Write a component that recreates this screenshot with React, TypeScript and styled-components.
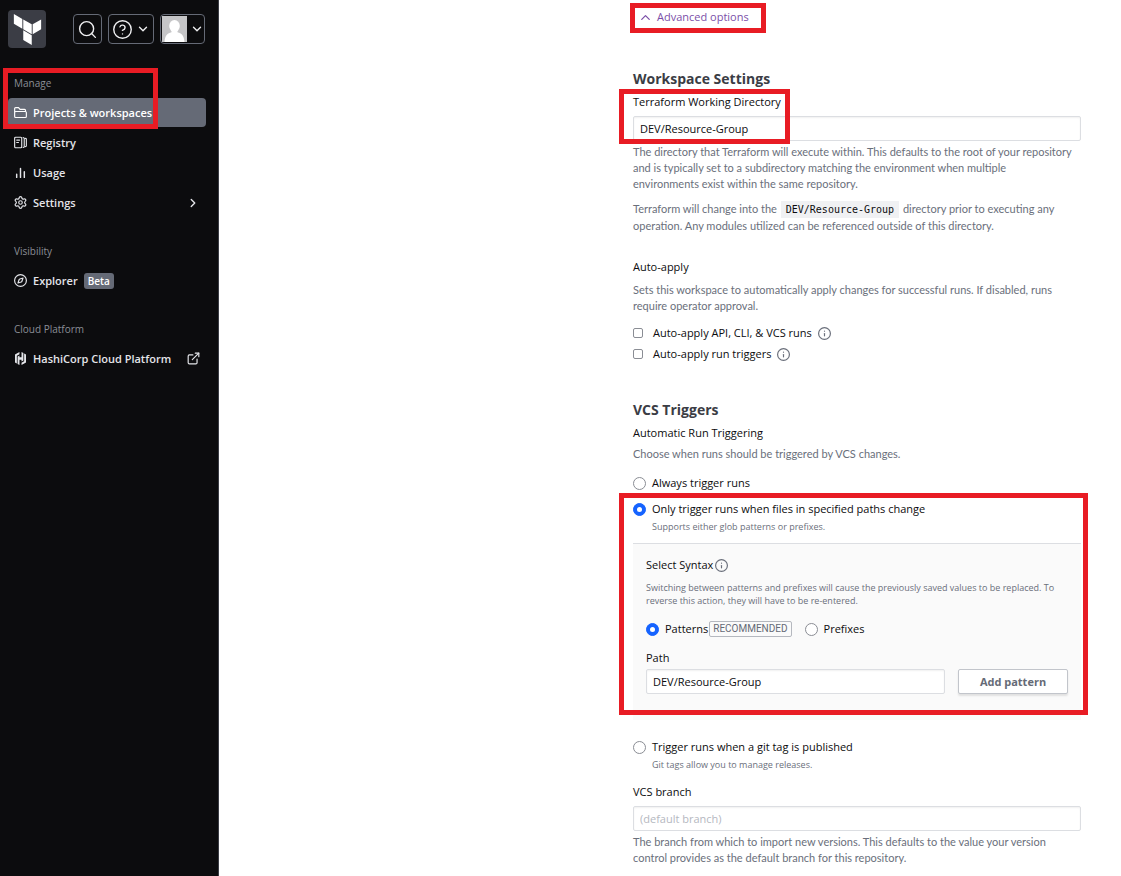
import React, { useState } from 'react';
import styled, { createGlobalStyle } from 'styled-components';
import {
  ChevronDown,
  ChevronRight,
  ChevronUp,
  CircleHelp,
  Compass,
  ExternalLink,
  Info,
  Search,
  Settings,
} from 'lucide-react';

const uiFont = '"Open Sans", "Noto Sans", sans-serif';
const proseFont = 'Lato, "Open Sans", sans-serif';
const color = {
  side: '#0c0c0e',
  sideText: '#e4e5e9',
  sideMuted: '#8b8e96',
  sideActive: '#656a76',
  ink: '#0c0c0e',
  heading: '#3b3d45',
  muted: '#6a6f7b',
  line: '#dcdee2',
  blue: '#1563ff',
  violet: '#7b4fa8',
  red: '#e81c24',
};

const GlobalStyle = createGlobalStyle`
  *, *::before, *::after { box-sizing: border-box; }
  body { margin: 0; background: #fff; color: ${color.ink}; font: 11px/16px ${uiFont}; }
  button, input { font: inherit; color: inherit; }
  button { cursor: pointer; }
  h2, p, ul { margin: 0; padding: 0; }
  svg { display: block; flex: none; }
`;

/* Layout */

const Page = styled.div`
  display: flex;
  min-height: 100vh;
`;

const Sidebar = styled.aside`
  flex: 0 0 219px;
  padding: 10px 12px 10px 8px;
  background: ${color.side};
  border-right: 1px solid #3b3d45;
  color: ${color.sideText};
`;

const Main = styled.main`
  flex: 1;
  display: flex;
  justify-content: flex-end;
  padding: 9px 40px 10px;
`;

const Form = styled.form`
  flex: 0 1 448px;
  min-width: 0;
`;

const Highlight = styled.span<{ $inset: string }>`
  position: absolute;
  inset: ${(p) => p.$inset};
  border: 5px solid ${color.red};
  pointer-events: none;
`;

/* Sidebar */

const TopBar = styled.div`
  display: flex;
  align-items: center;
  justify-content: space-between;
  padding-right: 1px;
  margin-bottom: 27px;
`;

const Home = styled.a`
  display: grid;
  place-items: center;
  width: 38px;
  height: 38px;
  border-radius: 4px;
  background: #3b3d45;
`;

const Tools = styled.div`
  display: flex;
  gap: 6px;
`;

const ToolButton = styled.button<{ $flush?: boolean }>`
  display: flex;
  align-items: center;
  gap: 3px;
  height: 30px;
  padding: ${(p) => (p.$flush ? '0 0 0 1px' : '0 3px')};
  border: 1px solid #656a76;
  border-radius: 4px;
  background: ${color.side};
  color: #efeff1;
`;

const NavSection = styled.section`
  position: relative;
  margin-bottom: 26px;
`;

const NavTitle = styled.div`
  padding-left: 6px;
  margin-bottom: 7px;
  font-size: 10px;
  font-weight: 500;
  color: ${color.sideMuted};
`;

const NavList = styled.ul`
  display: grid;
  gap: 1px;
  list-style: none;
`;

const NavLink = styled.a<{ $active?: boolean }>`
  display: flex;
  align-items: center;
  gap: 6px;
  height: 29px;
  padding: 0 6px;
  border-radius: 4px;
  background: ${(p) => (p.$active ? color.sideActive : 'transparent')};
  color: ${(p) => (p.$active ? '#fff' : color.sideText)};
  font-weight: 600;
  white-space: nowrap;
  text-decoration: none;

  .trailing {
    margin-left: auto;
  }
`;

const BetaBadge = styled.span`
  padding: 0 4px;
  border-radius: 3px;
  background: ${color.sideActive};
  color: #fff;
  font-size: 10px;
`;

/* Form */

const AdvancedToggle = styled.div`
  position: relative;
  display: flex;
  margin-bottom: 44px;
`;

const ToggleButton = styled.button`
  display: flex;
  align-items: center;
  gap: 4px;
  padding: 0 0 0 5px;
  border: 0;
  background: none;
  color: ${color.violet};
`;

const Heading = styled.h2`
  margin-bottom: 5px;
  font-size: 14px;
  line-height: 20px;
  font-weight: 700;
  color: ${color.heading};
`;

const Block = styled.div<{ $before?: number; $after?: number }>`
  position: relative;
  margin-top: ${(p) => p.$before ?? 0}px;
  margin-bottom: ${(p) => p.$after ?? 0}px;
`;

const Label = styled.label<{ $after?: number }>`
  display: block;
  margin-bottom: ${(p) => p.$after ?? 6}px;
  font-weight: 500;
`;

const GroupTitle = styled.div<{ $after: number }>`
  margin-bottom: ${(p) => p.$after}px;
  font-weight: 500;
`;

const TextInput = styled.input`
  display: block;
  width: 100%;
  height: 25px;
  padding: 0 6px;
  border: 1px solid ${color.line};
  border-radius: 2px;
  background: #fff;
  box-shadow: inset 0 1px 2px rgba(0, 0, 0, 0.06);
  outline: none;

  &::placeholder {
    color: #b5b8bf;
    opacity: 1;
  }
`;

const Help = styled.p<{ $after?: number; $tall?: boolean }>`
  margin-bottom: ${(p) => p.$after ?? 0}px;
  font-family: ${proseFont};
  line-height: ${(p) => (p.$tall ? 17 : 16)}px;
  color: ${color.muted};
`;

const SmallHelp = styled.p`
  font-size: 9px;
  line-height: 13px;
  color: ${color.muted};
`;

const Code = styled.code`
  padding: 3px 5px;
  margin: 0 1px;
  background: #f0f1f3;
  color: ${color.ink};
  font: 10px "DejaVu Sans Mono", monospace;
`;

const Choice = styled.label<{ $after?: number }>`
  display: flex;
  align-items: center;
  gap: 6px;
  margin-bottom: ${(p) => p.$after ?? 0}px;
  font-weight: 500;
`;

const Checkbox = styled.input.attrs({ type: 'checkbox' })`
  width: 10px;
  height: 10px;
  margin: 0 4px 0 0;
  appearance: none;
  border: 1px solid #8a8d94;
  border-radius: 2px;
  background: #fff;

  &:checked {
    border-color: ${color.blue};
    background: ${color.blue};
  }
`;

const Radio = styled.input.attrs({ type: 'radio' })`
  display: grid;
  place-items: center;
  flex: none;
  width: 13px;
  height: 13px;
  margin: 0;
  appearance: none;
  border: 1px solid #8a8d94;
  border-radius: 50%;
  background: #fff;

  &:checked {
    border-color: ${color.blue};
    background: ${color.blue};
  }

  &:checked::before {
    content: '';
    width: 5px;
    height: 5px;
    border-radius: 50%;
    background: #fff;
  }
`;

const ChoiceNote = styled(SmallHelp)`
  padding-left: 19px;
`;

const Panel = styled.div`
  padding: 13px 13px 26px;
  margin-top: 10px;
  border-top: 1px solid ${color.line};
  background: #fafafa;
`;

const TitleRow = styled.div`
  display: flex;
  align-items: center;
  gap: 2px;
  margin-bottom: 8px;
  font-weight: 500;
`;

const RadioRow = styled.div`
  display: flex;
  gap: 13px;
  margin: 14px 0 13px;
`;

const Tag = styled.span`
  padding: 0 3px;
  margin-left: -5px;
  border: 1px solid #b5b8bf;
  border-radius: 2px;
  font: 10px/14px Roboto, sans-serif;
  color: #656a76;
`;

const PathRow = styled.div`
  display: flex;
  gap: 13px;
`;

const AddButton = styled.button`
  flex: 0 0 110px;
  height: 25px;
  border: 1px solid #c2c5cb;
  border-radius: 2px;
  background: #fff;
  box-shadow: 0 2px 2px rgba(0, 0, 0, 0.1);
  font-weight: 700;
  line-height: 16px;
  color: #656a76;
`;

/* Icons */

/* Trims the empty margin of the 24px icon grid so the drawing fills its box. */
const tight = '1 1 22 22';

const TerraformLogo = () => (
  <svg width="31" height="31" viewBox="0 0 24 24" fill="#fff" aria-hidden="true">
    <path d="M1.44 0v7.575l6.561 3.79V3.787zm21.12 4.227l-6.561 3.791v7.574l6.56-3.787zM8.72 4.23v7.575l6.561 3.787V8.018zm0 8.405v7.575L15.28 24v-7.578z" />
  </svg>
);

const Avatar = () => (
  <svg width="25" height="26" viewBox="0 0 25 26" aria-hidden="true">
    <rect width="25" height="26" fill="#c5c5c7" />
    <ellipse cx="12.5" cy="10" rx="5.3" ry="6" fill="#fff" />
    <path d="M9.5 13h6v3.2c4 .9 6.5 3 7 9.8H2.5c.5-6.800 3-8.900 7-9.800z" fill="#fff" />
  </svg>
);

const FolderIcon = () => (
  <svg width="13" height="13" viewBox="0 0 16 16" fill="none" stroke="currentColor" strokeWidth="1.4" strokeLinejoin="round">
    <path d="M.8 13V3.200c0-.7.5-1.200 1.200-1.200h3.600l1.800 2.200h5.600c.7 0 1.200.5 1.200 1.200v1.400M.8 13c0 .7.5 1.200 1.200 1.200h12c.7 0 1.200-.5 1.200-1.200V8c0-.7-.5-1.200-1.200-1.200H2C1.300 6.800.8 7.300.8 8z" />
  </svg>
);

const RegistryIcon = () => (
  <svg width="13" height="13" viewBox="0 0 16 16" fill="none" stroke="currentColor" strokeWidth="1.4" strokeLinejoin="round" strokeLinecap="round">
    <rect x=".8" y="1.5" width="8.7" height="13" rx="1.2" />
    <path d="M3.300 5h3.600M3.300 8h2.200M11.200 1.800c1 0 1.400.5 1.400 1.200v10c0 .7-.4 1.200-1.400 1.200M14 3c.8 0 1.200.4 1.200 1v8c0 .6-.4 1-1.200 1" />
  </svg>
);

const UsageIcon = () => (
  <svg width="13" height="13" viewBox="0 0 16 16" fill="none" stroke="currentColor" strokeWidth="1.8" strokeLinecap="round">
    <path d="M3.300 10v4M8 3v11M12.700 7v7" />
  </svg>
);

const HashiCorpIcon = () => (
  <svg width="13" height="13" viewBox="0 0 24 24" fill="currentColor">
    <path d="M10.114 0 1.827 4.785v14.430l3.455 1.995V6.776l4.832-2.786zM13.886 0v9.882h-3.772V6.253L6.660 8.250v13.755L10.114 24v-9.855h3.772v3.602l3.454-1.995V1.996zM18.718 2.790v14.431l-4.832 2.790V24l8.287-4.784V4.784z" />
  </svg>
);

const InfoIcon = () => (
  <Info size={13} viewBox={tight} strokeWidth={2} color={color.muted} aria-label="More information" />
);

export default function App() {
  const [directory, setDirectory] = useState('DEV/Resource-Group');
  const [path, setPath] = useState('DEV/Resource-Group');
  const [trigger, setTrigger] = useState('paths');
  const [syntax, setSyntax] = useState('patterns');

  return (
    <Page>
      <GlobalStyle />
      <Sidebar>
        <TopBar>
          <Home href="#" aria-label="Terraform home">
            <TerraformLogo />
          </Home>
          <Tools>
            <ToolButton type="button" aria-label="Search">
              <Search size={21} strokeWidth={1.6} />
            </ToolButton>
            <ToolButton type="button" aria-label="Help">
              <CircleHelp size={21} strokeWidth={1.6} />
              <ChevronDown size={14} strokeWidth={2.4} />
            </ToolButton>
            <ToolButton type="button" aria-label="Account" $flush>
              <Avatar />
              <ChevronDown size={14} strokeWidth={2.4} />
            </ToolButton>
          </Tools>
        </TopBar>

        <nav>
          <NavSection>
            <NavTitle>Manage</NavTitle>
            <NavList>
              <li><NavLink href="#" $active><FolderIcon />Projects &amp; workspaces</NavLink></li>
              <li><NavLink href="#"><RegistryIcon />Registry</NavLink></li>
              <li><NavLink href="#"><UsageIcon />Usage</NavLink></li>
              <li>
                <NavLink href="#">
                  <Settings size={13} viewBox={tight} strokeWidth={2} />
                  Settings
                  <ChevronRight className="trailing" size={14} strokeWidth={2.4} />
                </NavLink>
              </li>
            </NavList>
            <Highlight $inset="-7px 48px 88px -5px" />
          </NavSection>
          <NavSection>
            <NavTitle>Visibility</NavTitle>
            <NavList>
              <li>
                <NavLink href="#">
                  <Compass size={13} viewBox={tight} strokeWidth={2} />
                  Explorer
                  <BetaBadge>Beta</BetaBadge>
                </NavLink>
              </li>
            </NavList>
          </NavSection>
          <NavSection>
            <NavTitle>Cloud Platform</NavTitle>
            <NavList>
              <li>
                <NavLink href="#">
                  <HashiCorpIcon />
                  HashiCorp Cloud Platform
                  <ExternalLink className="trailing" size={13} viewBox={tight} strokeWidth={2} />
                </NavLink>
              </li>
            </NavList>
          </NavSection>
        </nav>
      </Sidebar>

      <Main>
        <Form onSubmit={(e) => e.preventDefault()}>
          <AdvancedToggle>
            <ToggleButton type="button" aria-expanded="true">
              <ChevronUp size={15} strokeWidth={2} />
              Advanced options
            </ToggleButton>
            <Highlight $inset="-6px 315px -8px -3px" />
          </AdvancedToggle>

          <Heading>Workspace Settings</Heading>
          <Block $after={3}>
            <Label htmlFor="directory">Terraform Working Directory</Label>
            <TextInput id="directory" value={directory} onChange={(e) => setDirectory(e.target.value)} />
            <Highlight $inset="-5px 291px -3px -14px" />
          </Block>
          <Help $after={8}>
            The directory that Terraform will execute within. This defaults to the root of your repository
            <br />
            and is typically set to a subdirectory matching the environment when multiple
            <br />
            environments exist within the same repository.
          </Help>
          <Help $after={25} $tall>
            Terraform will change into the <Code>DEV/Resource-Group</Code> directory prior to executing any
            <br />
            operation. Any modules utilized can be referenced outside of this directory.
          </Help>

          <GroupTitle $after={7}>Auto-apply</GroupTitle>
          <Help $after={11}>
            Sets this workspace to automatically apply changes for successful runs. If disabled, runs
            <br />
            require operator approval.
          </Help>
          <Choice $after={5}>
            <Checkbox />
            Auto-apply API, CLI, &amp; VCS runs
            <InfoIcon />
          </Choice>
          <Choice $after={38}>
            <Checkbox />
            Auto-apply run triggers
            <InfoIcon />
          </Choice>

          <Heading>VCS Triggers</Heading>
          <GroupTitle $after={5}>Automatic Run Triggering</GroupTitle>
          <Help $after={13}>Choose when runs should be triggered by VCS changes.</Help>
          <Choice $after={10}>
            <Radio name="trigger" checked={trigger === 'always'} onChange={() => setTrigger('always')} />
            Always trigger runs
          </Choice>
          <Block $after={19}>
            <Choice $after={3}>
              <Radio name="trigger" checked={trigger === 'paths'} onChange={() => setTrigger('paths')} />
              Only trigger runs when files in specified paths change
            </Choice>
            <ChoiceNote>Supports either glob patterns or prefixes.</ChoiceNote>
            <Panel>
              <TitleRow>
                Select Syntax
                <InfoIcon />
              </TitleRow>
              <SmallHelp>
                Switching between patterns and prefixes will cause the previously saved values to be replaced. To
                <br />
                reverse this action, they will have to be re-entered.
              </SmallHelp>
              <RadioRow>
                <Choice>
                  <Radio name="syntax" checked={syntax === 'patterns'} onChange={() => setSyntax('patterns')} />
                  Patterns
                  <Tag>RECOMMENDED</Tag>
                </Choice>
                <Choice>
                  <Radio name="syntax" checked={syntax === 'prefixes'} onChange={() => setSyntax('prefixes')} />
                  Prefixes
                </Choice>
              </RadioRow>
              <Label htmlFor="path" $after={3}>Path</Label>
              <PathRow>
                <TextInput id="path" value={path} onChange={(e) => setPath(e.target.value)} />
                <AddButton type="button">Add pattern</AddButton>
              </PathRow>
            </Panel>
            <Highlight $inset="-8px -7px 5px -14px" />
          </Block>
          <Choice $after={3}>
            <Radio name="trigger" checked={trigger === 'tag'} onChange={() => setTrigger('tag')} />
            Trigger runs when a git tag is published
          </Choice>
          <ChoiceNote>Git tags allow you to manage releases.</ChoiceNote>

          <Block $before={13} $after={3}>
            <Label htmlFor="branch">VCS branch</Label>
            <TextInput id="branch" placeholder="(default branch)" />
          </Block>
          <Help>
            The branch from which to import new versions. This defaults to the value your version
            <br />
            control provides as the default branch for this repository.
          </Help>
        </Form>
      </Main>
    </Page>
  );
}
